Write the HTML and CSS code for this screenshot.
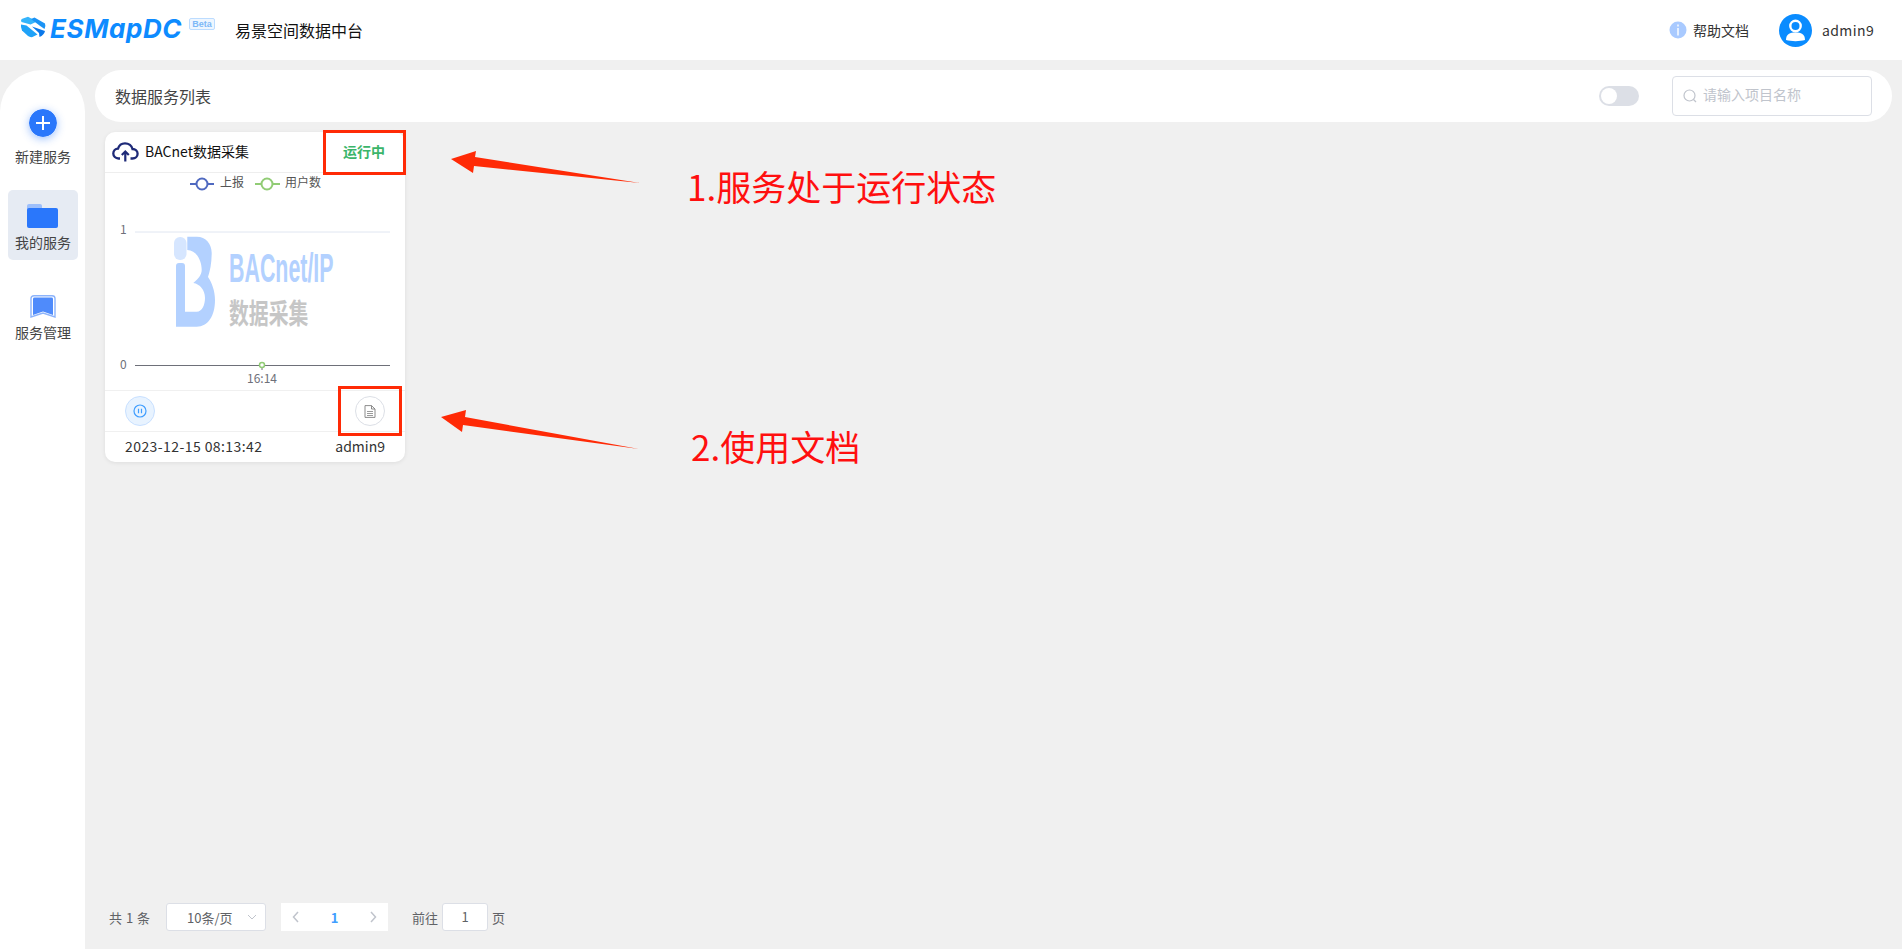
FILE: index.html
```html
<!DOCTYPE html>
<html>
<head>
	<meta charset="utf-8">
	<title>易景空间数据中台</title>
	<link rel="stylesheet" href="styles.css">
</head>
<body>
	<div class="header">
		<div class="brand">
			<svg class="brand_icon" width="26" height="22" viewBox="0 0 26 22">
				<path d="M1.500 6 Q0 3.500 3 2.500 L8 .8 L17 5.500 L10.500 8.500 Z" fill="#35b4fb"/>
				<path d="M11 3 L14.500 1.500 L25 7.500 Q26 10 24.500 13 L19.500 9.500 Z" fill="#1b93f5"/>
				<path d="M1 8.500 L6.500 9.500 L17.500 18.500 L12.500 21 Q10 21.500 8 20 L2 14.500 Q.5 11 1 8.500 Z" fill="#1fa2f8"/>
				<path d="M12 10.500 L25 15 Q24 19 19.500 21 L19 17 Z" fill="#0a78ea"/>
			</svg>
			<span class="brand_name">ESMapDC</span>
			<span class="beta">Beta</span>
			<span class="brand_title">易景空间数据中台</span>
		</div>
		<div class="header_right">
			<svg width="18" height="18" viewBox="0 0 18 18">
				<circle cx="9" cy="9" r="8.5" fill="#a9caff"/>
				<rect x="8" y="3.5" width="2" height="2" fill="#e6f0ff"/>
				<rect x="8" y="7" width="2" height="7.5" fill="#e6f0ff"/>
			</svg>
			<span class="help">帮助文档</span>
			<svg class="avatar" width="33" height="33" viewBox="0 0 33 33">
				<circle cx="16.5" cy="16.5" r="16.5" fill="#0a8cff"/>
				<circle cx="16.5" cy="12" r="5.2" fill="none" stroke="#ffffff" stroke-width="2.4"/>
				<path d="M7 26 C7 20 11 18.500 16.500 18.500 C22 18.500 26 20 26 26 C21 27.500 12 27.500 7 26 Z" fill="#ffffff"/>
			</svg>
			<span class="user">admin9</span>
		</div>
	</div>

	<div class="main">
		<div class="side">
			<div class="side_item">
				<svg class="plus_icon" width="28" height="28" viewBox="0 0 28 28">
					<circle cx="14" cy="14" r="14" fill="#2a77fb"/>
					<path d="M14 7 V21 M7 14 H21" stroke="#ffffff" stroke-width="2"/>
				</svg>
				<span>新建服务</span>
			</div>
			<div class="side_item side_active">
				<svg width="32" height="24" viewBox="0 0 32 24">
					<path d="M0 2 Q0 0 2 0 H13 Q15 0 15 2 V6 H0 Z" fill="#9dbffb"/>
					<rect x="0" y="4" width="31" height="20" rx="2" fill="#2a77fb"/>
				</svg>
				<span>我的服务</span>
			</div>
			<div class="side_item side_manage">
				<svg width="26" height="23" viewBox="0 0 26 23">
					<path d="M1 3.500 Q1 .8 4 .8 H22 Q25 .8 25 3.500 V22 L13 18 L1 22 Z" fill="#ffffff" stroke="#8db4fb" stroke-width="1.400"/>
					<path d="M3 4 Q3 2.600 4.500 2.600 H21.500 Q23 2.600 23 4 V20 L13 16.500 L3 20 Z" fill="#4f8bfb"/>
				</svg>
				<span>服务管理</span>
			</div>
		</div>

		<div class="content">
			<div class="title_bar">
				<span class="title_text">数据服务列表</span>
				<div class="title_tools">
					<div class="toggle"><div class="knob"></div></div>
					<div class="search">
						<svg width="14" height="14" viewBox="0 0 14 14">
							<circle cx="6.500" cy="6.500" r="5.500" fill="none" stroke="#c0c4cc" stroke-width="1.200"/>
							<path d="M10.500 10.500 L13 13" stroke="#c0c4cc" stroke-width="1.200"/>
						</svg>
						<span>请输入项目名称</span>
					</div>
				</div>
			</div>

			<div class="card">
				<div class="card_head">
					<div class="card_name">
						<svg width="27" height="20" viewBox="0 0 27 20">
							<path d="M8 16.500 H6.500 C3.500 16.500 1.300 14.300 1.300 11.500 C1.300 8.800 3.300 6.800 6 6.600 C7 3.300 9.800 1.300 13 1.300 C16.700 1.300 19.800 3.800 20.500 7 C23.400 7 25.600 9.200 25.600 11.800 C25.600 14.500 23.400 16.500 20.500 16.500 H18.500" fill="none" stroke="#1e2a78" stroke-width="2.300"/>
							<path d="M13.300 19.500 V10 M9.800 13 L13.300 9.500 L16.800 13" fill="none" stroke="#1e2a78" stroke-width="2.200"/>
						</svg>
						<span>BACnet数据采集</span>
					</div>
					<span class="card_state">运行中</span>
				</div>

				<svg class="chart" width="300" height="217" viewBox="105 173 300 217">
					<path d="M190 184 H214" stroke="#4f69c0" stroke-width="2"/>
					<circle cx="202" cy="184" r="5.500" fill="#ffffff" stroke="#4f69c0" stroke-width="2"/>
					<text x="220" y="187" class="chart_legend">上报</text>
					<path d="M255 184 H280" stroke="#91cc75" stroke-width="2"/>
					<circle cx="267" cy="184" r="5.500" fill="#ffffff" stroke="#91cc75" stroke-width="2"/>
					<text x="285" y="187" class="chart_legend">用户数</text>

					<path d="M135 232 H390" stroke="#e0e6f1"/>
					<text x="120" y="234" class="chart_axis">1</text>
					<text x="120" y="369" class="chart_axis">0</text>

					<rect x="174" y="237" width="12.500" height="23" rx="6" fill="#d6e6ff"/>
					<path d="M187.300 236.700 H196.700 C206 236.700 211.700 244 211.700 253 C211.700 263 210 271 208 277 C212 283 215 291 215 300 C215 316 208 326.700 196.700 326.700 H176 V266 Q176 263 179 263 H182 Q185 263 185 266 V311.700 H196.700 C202 311.700 205 305 205 298 C205 290 200 284 193.300 283 C198 279 201.700 275 201.700 270 C201.700 260 196 250 187.300 250 Z" fill="#b3d1ff"/>
					<text class="logo_latin" transform="translate(229 282) scale(.535 1)">BACnet/IP</text>
					<text class="logo_cjk" transform="translate(229 324) scale(.71 1)">数据采集</text>

					<path d="M135 365.500 H390" stroke="#6e7079"/>
					<path d="M262 365 V370" stroke="#6e7079"/>
					<circle cx="262" cy="365" r="2.500" fill="#ffffff" stroke="#91cc75" stroke-width="1.500"/>
					<text x="247" y="383" class="chart_axis">16:14</text>
				</svg>

				<div class="card_ops">
					<div class="op_btn op_run">
						<svg width="14" height="14" viewBox="0 0 14 14">
							<circle cx="7" cy="7" r="6" fill="none" stroke="#409eff" stroke-width="1.200"/>
							<path d="M5.500 4.800 V9.200 M8.500 4.800 V9.200" stroke="#409eff" stroke-width="1.200"/>
						</svg>
					</div>
					<div class="op_btn op_doc">
						<svg width="12" height="13" viewBox="0 0 12 13">
							<path d="M1 .6 H7.500 L11 4 V12.400 H1 Z M7.500 .6 V4 H11" fill="none" stroke="#808080" stroke-width=".9"/>
							<path d="M3 6.500 H9 M3 8.500 H9 M3 10.500 H9" stroke="#808080" stroke-width=".8"/>
						</svg>
					</div>
				</div>
				<div class="card_foot">
					<span class="card_date">2023-12-15 08:13:42</span>
					<span>admin9</span>
				</div>
			</div>

			<div class="pager">
				<span class="pager_total">共 1 条</span>
				<div class="pager_size">
					<span>10条/页</span>
					<svg width="10" height="6" viewBox="0 0 10 6"><path d="M1 1 L5 5 L9 1" fill="none" stroke="#c0c4cc"/></svg>
				</div>
				<div class="pager_nums">
					<svg width="8" height="12" viewBox="0 0 8 12"><path d="M6 1 L1.500 6 L6 11" fill="none" stroke="#c0c4cc" stroke-width="1.500"/></svg>
					<b>1</b>
					<svg width="8" height="12" viewBox="0 0 8 12"><path d="M2 1 L6.500 6 L2 11" fill="none" stroke="#c0c4cc" stroke-width="1.500"/></svg>
				</div>
				<span class="pager_goto">前往</span>
				<div class="pager_input">1</div>
				<span class="pager_page">页</span>
			</div>
		</div>
	</div>

	<!-- red notes drawn over the page -->
	<div class="note_box note_box1"></div>
	<div class="note_box note_box2"></div>
	<svg class="note_arrows" width="1902" height="949" viewBox="0 0 1902 949">
		<polygon points="451,159 476,151 475,157 640,183 474,166 473,173" fill="#ff2a06"/>
		<polygon points="441,417 466,410 465,417 639,449 463,425 462,432" fill="#ff2a06"/>
	</svg>
	<div class="note_text note_text1">1.服务处于运行状态</div>
	<div class="note_text note_text2">2.使用文档</div>
</body>
</html>
```

FILE: styles.css
```css
* {
	box-sizing: border-box;
}

body {
	margin: 0;
	height: 949px;
	overflow: hidden;
	background-color: #f0f0f0;
	font-family: "Noto Sans CJK SC", "Noto Sans", sans-serif;
	font-size: 14px;
	color: #333333;
}

svg {
	display: block;
	flex: none;
}

.header {
	height: 60px;
	background-color: white;
	display: flex;
	align-items: center;
	justify-content: space-between;
	padding: 0 30px 0 20px;
}

.brand {
	display: flex;
	align-items: center;
}

.brand_icon {
	margin-top: -6px;
}

.brand_name {
	margin-left: 4px;
	width: 135px;
	font-family: "Inter", sans-serif;
	font-style: italic;
	font-weight: 700;
	font-size: 26px;
	line-height: 30px;
	letter-spacing: 0.6px;
	color: #0d8bff;
	margin-top: -2px;
}

.beta {
	margin-left: 4px;
	margin-top: -12px;
	width: 26px;
	height: 12px;
	border: 1px solid #bcdcff;
	border-radius: 2px;
	background-color: #eef6ff;
	color: #7db8f7;
	font-family: "Liberation Sans", sans-serif;
	font-size: 9px;
	font-weight: bold;
	line-height: 10px;
	text-align: center;
}

.brand_title {
	margin-left: 20px;
	margin-top: -1px;
	font-size: 16px;
	color: #111111;
}

.header_right {
	display: flex;
	align-items: center;
}

.help {
	margin-left: 6px;
	margin-top: -1px;
	color: #333333;
}

.avatar {
	margin-left: 30px;
}

.user {
	margin-left: 10px;
	margin-top: -1px;
	width: 50px;
	letter-spacing: 0.4px;
}

.main {
	display: flex;
	height: 889px;
	padding-top: 10px;
}

.side {
	width: 85px;
	background-color: white;
	border-radius: 42px 42px 0 0;
	padding: 39px 7px 0 8px;
}

.side_item {
	height: 70px;
	display: flex;
	flex-direction: column;
	align-items: center;
	color: #444444;
	line-height: 20px;
}

.plus_icon {
	margin: 0 0 9px;
	border-radius: 50%;
	box-shadow: 0 2px 8px rgba(42, 119, 251, 0.45);
}

.side_active {
	margin-top: 11px;
	background-color: #e6ebf3;
	border-radius: 5px;
	padding-top: 14px;
}

.side_active svg {
	margin-bottom: 4px;
}

.side_manage {
	margin-top: 35px;
}

.side_manage svg {
	margin-bottom: 4px;
}

.content {
	flex: 1;
	display: flex;
	flex-direction: column;
	padding: 0 10px 0 10px;
}

.title_bar {
	height: 52px;
	background-color: white;
	border-radius: 26px;
	display: flex;
	align-items: center;
	justify-content: space-between;
	padding: 0 20px;
}

.title_text {
	font-size: 16px;
	color: #444444;
}

.title_tools {
	display: flex;
	align-items: center;
}

.toggle {
	width: 40px;
	height: 20px;
	border-radius: 10px;
	background-color: #dcdfe6;
	padding: 2px;
}

.knob {
	width: 16px;
	height: 16px;
	border-radius: 50%;
	background-color: white;
}

.search {
	margin-left: 33px;
	width: 200px;
	height: 40px;
	border: 1px solid #dcdfe6;
	border-radius: 4px;
	display: flex;
	align-items: center;
	padding-left: 10px;
	gap: 6px;
	color: #c0c4cc;
}

.search span {
	margin-top: -5px;
}

.card {
	margin: 10px 0 0 10px;
	width: 300px;
	height: 330px;
	background-color: white;
	border-radius: 10px;
	box-shadow: 0 1px 4px rgba(0, 0, 0, 0.08);
}

.card_head {
	height: 41px;
	border-bottom: 1px solid #eeeeee;
	display: flex;
	align-items: center;
	justify-content: space-between;
	padding: 0 20px 0 7px;
}

.card_name {
	display: flex;
	align-items: center;
	gap: 6px;
	color: #111111;
}

.card_name span {
	margin-top: -2px;
}

.card_state {
	color: #3bb56a;
	font-weight: bold;
	margin-top: -2px;
}

.chart_legend {
	font-size: 12px;
	fill: #555555;
}

.chart_axis {
	font-size: 12px;
	fill: #6e7079;
}

.logo_latin {
	font-family: "Liberation Sans", sans-serif;
	font-size: 40px;
	font-weight: bold;
	fill: #b3d1ff;
}

.logo_cjk {
	font-size: 28px;
	font-weight: bold;
	fill: #c6c6c6;
}

.card_ops {
	height: 42px;
	border-top: 1px solid #f0f0f0;
	border-bottom: 1px solid #f0f0f0;
	display: flex;
	align-items: center;
	justify-content: space-between;
	padding: 0 20px;
}

.op_btn {
	width: 30px;
	height: 30px;
	border-radius: 50%;
	display: flex;
	align-items: center;
	justify-content: center;
}

.op_run {
	background-color: #e8f3ff;
	border: 1px solid #c8e0ff;
}

.op_doc {
	background-color: white;
	border: 1px solid #dcdfe6;
}

.card_foot {
	display: flex;
	justify-content: space-between;
	padding: 0 20px;
	line-height: 28px;
	color: #333333;
}

.card_date {
	letter-spacing: 0.42px;
}

.pager {
	margin-top: auto;
	height: 28px;
	margin-bottom: 18px;
	display: flex;
	align-items: center;
	font-size: 13px;
	color: #606266;
	padding-left: 14px;
}

.pager_total {
	width: 57px;
	word-spacing: 1px;
}

.pager_size {
	width: 100px;
	height: 28px;
	background-color: white;
	border: 1px solid #dcdfe6;
	border-radius: 3px;
	display: flex;
	align-items: center;
	justify-content: space-between;
	padding: 0 8px 0 20px;
}

.pager_nums {
	margin-left: 15px;
	width: 107px;
	height: 28px;
	background-color: white;
	display: flex;
	align-items: center;
	justify-content: space-between;
	padding: 0 11px;
}

.pager_nums b {
	color: #409eff;
}

.pager_goto {
	margin-left: 24px;
}

.pager_input {
	margin-left: 4px;
	width: 46px;
	height: 28px;
	background-color: white;
	border: 1px solid #dcdfe6;
	border-radius: 3px;
	text-align: center;
	line-height: 26px;
}

.pager_page {
	margin-left: 4px;
}

.note_box {
	position: absolute;
	border: 3px solid #ff2a06;
}

.note_box1 {
	left: 323px;
	top: 130px;
	width: 83px;
	height: 45px;
}

.note_box2 {
	left: 338px;
	top: 386px;
	width: 64px;
	height: 50px;
}

.note_arrows {
	position: absolute;
	left: 0;
	top: 0;
	pointer-events: none;
}

.note_text {
	position: absolute;
	font-size: 35px;
	line-height: 40px;
	color: #ff0f0f;
	white-space: nowrap;
}

.note_text1 {
	left: 687px;
	top: 166px;
}

.note_text2 {
	left: 691px;
	top: 426px;
}
```
